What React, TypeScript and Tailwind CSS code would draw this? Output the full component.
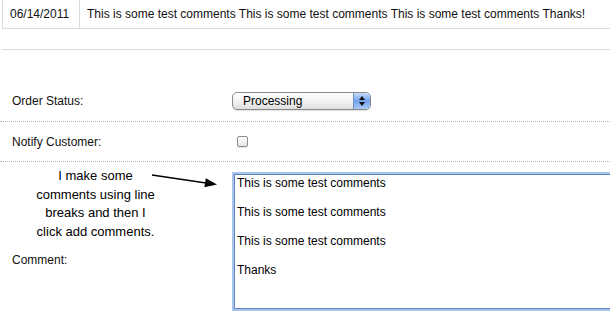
export default function App() {
  const comments =
    "This is some test comments This is some test comments This is some test comments Thanks!";
  const body =
    "This is some test comments\n\nThis is some test comments\n\nThis is some test comments\n\nThanks";
  return (
    <div className="relative h-[315px] w-[610px] overflow-hidden bg-white text-[12px] leading-[14px] text-[#111] font-['Liberation_Sans',Arial,sans-serif]">
      {/* history table row */}
      <div className="ml-[2px] flex h-[29px] border-b border-l border-[#dcdcdc]">
        <div className="flex w-[77px] shrink-0 items-center border-r border-[#dcdcdc] pl-[7px]">06/14/2011</div>
        <div className="flex items-center whitespace-nowrap pl-[7px]">{comments}</div>
      </div>
      <div className="ml-[2px] mt-[20px] border-t border-[#dcdcdc]" />

      {/* form */}
      <div className="mt-[31px]">
        <div className="flex h-[41px] items-center border-b border-dotted border-[#b4b4b4]">
          <div className="w-[232px] shrink-0 pl-[12px]">Order Status:</div>
          <div className="flex h-[18px] w-[139px] shrink-0 items-center overflow-hidden rounded-[5px] border border-[#8a8a8a] bg-linear-to-b from-white via-[#f3f3f3] to-[#dedede] shadow-[0_1px_1px_rgba(0,0,0,0.12)]">
            <span className="flex-1 pl-[10px] text-[12px] text-black">Processing</span>
            <div className="flex h-full w-[17px] flex-col items-center justify-center gap-[2px] border-l border-[#6c8ec4] bg-linear-to-b from-[#c6dcfa] via-[#6fa2ec] to-[#a9cbf6]">
              <svg width="6" height="4" viewBox="0 0 6 4">
                <polygon points="3,0 6,4 0,4" fill="#111" />
              </svg>
              <svg width="6" height="4" viewBox="0 0 6 4">
                <polygon points="0,0 6,0 3,4" fill="#111" />
              </svg>
            </div>
          </div>
        </div>

        <div className="flex h-[40px] items-center border-b border-dotted border-[#b4b4b4]">
          <div className="w-[232px] shrink-0 pl-[12px]">Notify Customer:</div>
          <div className="ml-[5px] h-[11px] w-[11px] shrink-0 rounded-[2px] border border-[#8e8e8e] bg-linear-to-b from-white to-[#e4e4e4] shadow-[0_1px_1px_rgba(0,0,0,0.1)]" />
        </div>

        <div className="flex">
          <div className="w-[232px] shrink-0">
            <div className="mt-[5px] w-[191px] whitespace-nowrap text-center text-[13px] leading-[18.5px] text-black">
              I make some
              <br />
              comments using line
              <br />
              breaks and then I
              <br />
              click add comments.
            </div>
            <div className="mt-[12px] pl-[12px]">Comment:</div>
          </div>
          <textarea
            readOnly
            value={body}
            className="ml-[2px] mt-[12px] h-[135px] w-[420px] shrink-0 resize-none overflow-hidden border border-[#5d86c2] pl-[2px] pt-[1px] text-[12px] leading-[14.5px] text-black outline-none ring-2 ring-[#a9c3ea] font-['Liberation_Sans',Arial,sans-serif]"
          />
        </div>
      </div>

      {/* annotation arrow */}
      <svg className="pointer-events-none absolute left-0 top-0" width="610" height="315">
        <line x1="152" y1="175" x2="206" y2="182.9" stroke="#000" strokeWidth="1.5" />
        <polygon points="217,184.5 204.4,187.2 205.8,178.3" fill="#000" />
      </svg>
    </div>
  );
}
